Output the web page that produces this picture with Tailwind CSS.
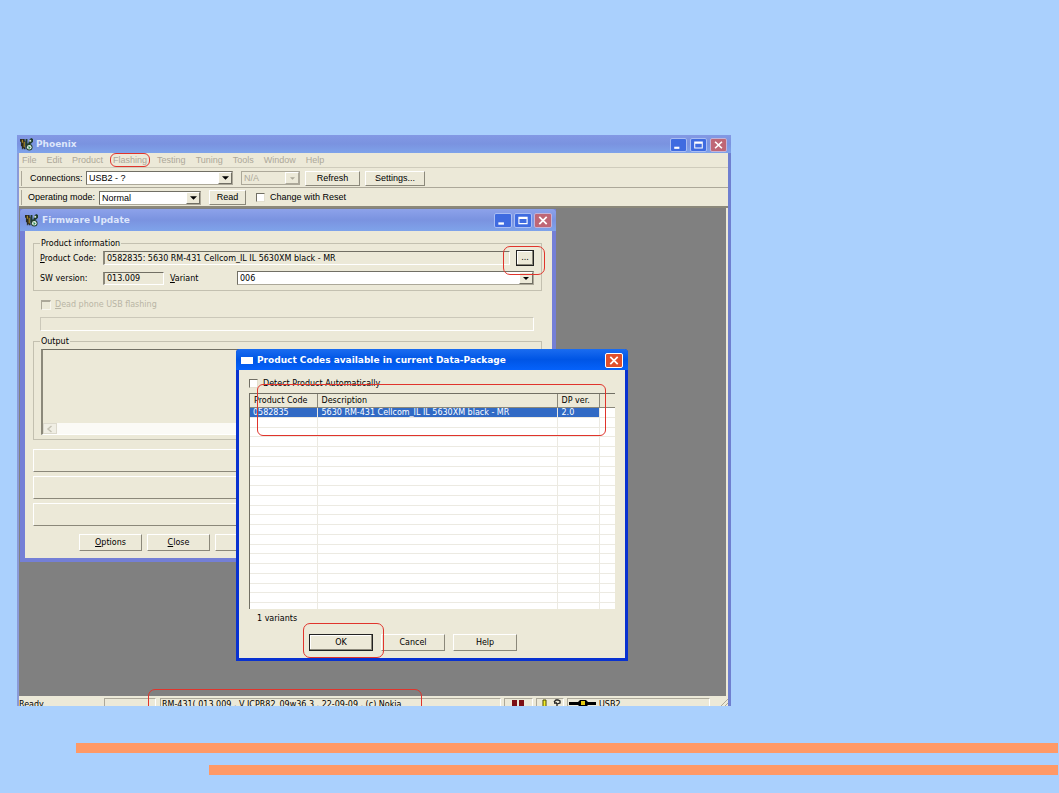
<!DOCTYPE html>
<html lang="en">
<head>
<meta charset="utf-8">
<title>Phoenix</title>
<script src="https://cdn.jsdelivr.net/npm/@tailwindcss/browser@4"></script>
</head>
<body class="min-h-screen bg-[#aad0fd] font-['Liberation_Sans',sans-serif] text-[9px] leading-[11px] text-black">
<svg class="hidden" aria-hidden="true">
  <symbol id="phoenix" viewBox="0 0 14 14">
    <path d="M0 1h5v2h1v9H4v-1H3v1H2V9H1V4H0z" fill="#2a2a22"/>
    <path d="M2 2h1v3H2zM4 4h1v6H4z" fill="#c9a227"/>
    <path d="M6 1h2v5h1l1-4 2-2 2 1v3l-2 2-2 1-2 4H7L6 8z" fill="#1f3b2c"/>
    <path d="M10 2h2v2h-2z" fill="#d8e8d0"/>
    <circle cx="10" cy="10" r="3.5" fill="#23402e"/>
    <circle cx="10" cy="10" r="2.5" fill="#dfeee4"/>
    <path d="M9 8.5l2.5 1.5L9.500 12z" fill="#2c8a58"/>
  </symbol>
  <symbol id="arrow" viewBox="0 0 8 4"><path d="M0 0h8L4 4z" fill="currentColor"/></symbol>
  <symbol id="min" viewBox="0 0 16 14"><path d="M3 9h6v2.500H3z" fill="#fff"/></symbol>
  <symbol id="max" viewBox="0 0 16 14"><path d="M3 3h10v8H3zM4.200 5.500v4.300h7.600V5.500z" fill="#fff" fill-rule="evenodd"/></symbol>
  <symbol id="close" viewBox="0 0 16 14"><path d="M4 3.200l8 7.600M12 3.200l-8 7.600" stroke="#fff" stroke-width="1.900" fill="none"/></symbol>
</svg>

<main class="flex min-h-screen flex-col pt-[135px]">
  <section class="relative ml-[17px] flex h-[571px] w-[714px] flex-col overflow-hidden bg-[#ece9d8]">
    <!-- Title bar -->
    <header class="flex h-[18px] shrink-0 items-center bg-linear-to-b from-[#8398e4] via-[#7a93e0] to-[#7fa3ea] pt-px pr-[4px] pl-[3px]">
      <svg class="size-[13px]"><use href="#phoenix"/></svg>
      <h1 class="ml-[3px] grow font-['DejaVu_Sans',sans-serif] text-[9px] font-bold text-[#dde6fb]">Phoenix</h1>
      <div class="flex gap-[3px]">
        <button aria-label="Minimize" class="h-[14px] w-[17px] rounded-[2px] border border-[#a9bdf3] bg-[#3f6be0]"><svg class="size-full"><use href="#min"/></svg></button>
        <button aria-label="Maximize" class="h-[14px] w-[17px] rounded-[2px] border border-[#a9bdf3] bg-[#3f6be0]"><svg class="size-full"><use href="#max"/></svg></button>
        <button aria-label="Close" class="h-[14px] w-[17px] rounded-[2px] border border-[#c3b3d8] bg-[#bf6675]"><svg class="size-full"><use href="#close"/></svg></button>
      </div>
    </header>

    <div class="flex min-h-0 grow flex-col border-r-[3px] border-l-2 border-r-[#6f7fd0] border-l-[#8a9ad8]">
      <nav class="flex h-[15px] shrink-0 items-center gap-[10px] border-b border-[#cfccbc] pl-[3px] text-[#aca899]">
        <button>File</button><button>Edit</button><button>Product</button><button>Flashing</button><button>Testing</button><button>Tuning</button><button>Tools</button><button>Window</button><button>Help</button>
      </nav>
      <div class="flex h-[20px] shrink-0 items-center border-b border-[#aca899] pt-px pl-[2px]">
        <span class="h-[15px] w-px bg-[#aca899]"></span>
        <label for="conn" class="w-[57px] pl-[8px]">Connections:</label>
        <div class="relative ml-[7px] h-[14px] w-[147px] border border-t-[#716f64] border-r-[#aca899] border-b-[#aca899] border-l-[#716f64] bg-white">
          <select id="conn" class="h-[12px] w-full appearance-none pl-[2px] leading-[12px]"><option>USB2 - ?</option></select>
          <span class="pointer-events-none absolute inset-y-0 right-0 flex w-[14px] items-center justify-center border border-white border-r-[#716f64] border-b-[#716f64] bg-[#ece9d8]"><svg class="h-[4px] w-[7px]"><use href="#arrow"/></svg></span>
        </div>
        <div class="relative ml-[8px] h-[14px] w-[59px] border border-[#aca899] text-[#aca899]">
          <select aria-label="Secondary connection" disabled class="h-[12px] w-full appearance-none pl-[2px] leading-[12px]"><option>N/A</option></select>
          <span class="pointer-events-none absolute inset-y-0 right-0 flex w-[14px] items-center justify-center border border-white border-r-[#aca899] border-b-[#aca899] bg-[#ece9d8]"><svg class="h-[3px] w-[5px]"><use href="#arrow"/></svg></span>
        </div>
        <button class="ml-[5px] h-[15px] w-[55px] border border-white border-r-[#8b887a] border-b-[#8b887a]">Refresh</button>
        <button class="ml-[5px] h-[15px] w-[60px] border border-white border-r-[#8b887a] border-b-[#8b887a]">Settings...</button>
      </div>
      <div class="flex h-[20px] shrink-0 items-center border-b-2 border-[#8b887a] pt-px pl-[2px]">
        <span class="h-[15px] w-px bg-[#aca899]"></span>
        <label for="mode" class="w-[70px] pl-[6px] whitespace-nowrap">Operating mode:</label>
        <div class="relative ml-[7px] h-[14px] w-[102px] border border-t-[#716f64] border-r-[#aca899] border-b-[#aca899] border-l-[#716f64] bg-white">
          <select id="mode" class="h-[12px] w-full appearance-none pl-[2px] leading-[12px]"><option>Normal</option></select>
          <span class="pointer-events-none absolute inset-y-0 right-0 flex w-[14px] items-center justify-center border border-white border-r-[#716f64] border-b-[#716f64] bg-[#ece9d8]"><svg class="h-[4px] w-[7px]"><use href="#arrow"/></svg></span>
        </div>
        <button class="ml-[8px] h-[15px] w-[37px] border border-white border-r-[#8b887a] border-b-[#8b887a]">Read</button>
        <input id="reset" type="checkbox" class="ml-[10px] size-[9px] appearance-none border border-[#716f64] border-r-[#e4e0d0] border-b-[#e4e0d0] bg-white">
        <label for="reset" class="ml-[5px]">Change with Reset</label>
      </div>

      <!-- Document area -->
      <div class="mr-[2px] grow bg-[#808080]"></div>

      <footer class="flex h-[10px] shrink-0 items-start overflow-hidden pt-[2px] font-['DejaVu_Sans',sans-serif] text-[8px] leading-[13px]">
        <span class="w-[85px]">Ready</span>
        <span class="h-[10px] w-[52px] border border-[#aca899] border-r-white"></span>
        <span class="ml-[4px] h-[20px] w-[341px] border border-[#aca899] border-r-white pl-[1px] leading-[11px]">RM-431( 013.009 , V ICPR82_09w36.3 , 22-09-09 , (c) Nokia</span>
        <span class="ml-[3px] h-[20px] w-[29px] border border-[#aca899] border-r-white"><svg class="mt-px ml-[7px] h-[8px] w-[12px]"><path d="M0 0h5v8H0zM7 0h5v8H7z" fill="#7c0f14"/></svg></span>
        <span class="ml-[3px] h-[20px] w-[28px] border border-[#aca899] border-r-white"><svg class="ml-[5px] h-[8px] w-[20px]"><path d="M1 8V1h3v7" fill="#f4ee2a" stroke="#4d4a00"/><path d="M12 3l2-2h2l2 1v2l-3 1v2M12 4h3" fill="none" stroke="#222" stroke-width="1.300"/></svg></span>
        <span class="ml-[3px] flex h-[20px] w-[143px] border border-[#aca899] border-r-white pl-[1px] leading-[11px]"><svg class="mr-[3px] h-[8px] w-[27px]"><path d="M0 3h9l2-2h6l2 2h8v3h-8l-2 2h-6L9 6H0z" fill="#000"/><path d="M12 2h4v4h-4z" fill="#e2c911"/></svg>USB2</span>
        <svg class="ml-auto h-[9px] w-[8px]"><path d="M0 9l8-8M4 9l4-4" stroke="#aca899"/></svg>
      </footer>
    </div>

    <!-- Firmware Update window -->
    <section class="absolute top-[74px] left-[3px] flex h-[353px] w-[536px] flex-col border-r-4 border-b-4 border-l-[5px] border-[#747fd6] bg-[#ece9d8] font-['DejaVu_Sans',sans-serif] text-[8px] leading-[11px]">
      <header class="-mr-1 -ml-[5px] flex h-[22px] shrink-0 items-center rounded-t bg-linear-to-b from-[#8da2ea] via-[#7a93e0] to-[#7fa3ea] pt-px pr-[4px] pl-[5px]">
        <svg class="size-[13px]"><use href="#phoenix"/></svg>
        <h2 class="ml-[4px] grow text-[9px] font-bold text-[#dde6fb]">Firmware Update</h2>
        <div class="flex gap-[2px]">
          <button aria-label="Minimize" class="h-[15px] w-[18px] rounded-[2px] border border-[#a9bdf3] bg-[#3f6be0]"><svg class="size-full"><use href="#min"/></svg></button>
          <button aria-label="Maximize" class="h-[15px] w-[18px] rounded-[2px] border border-[#a9bdf3] bg-[#3f6be0]"><svg class="size-full"><use href="#max"/></svg></button>
          <button aria-label="Close" class="h-[15px] w-[18px] rounded-[2px] border border-[#c3b3d8] bg-[#bf6675]"><svg class="size-full"><use href="#close"/></svg></button>
        </div>
      </header>
      <div class="flex grow flex-col pt-[7px] pr-[10px] pl-[8px]">
        <fieldset class="h-[53px] border border-[#c3c0b0] pr-[7px] pl-[6px]">
          <legend class="px-px">Product information</legend>
          <div class="mt-px flex h-[16px] items-center">
            <label for="code" class="w-[63px]"><u>P</u>roduct Code:</label>
            <input id="code" readonly value="0582835: 5630 RM-431 Cellcom_IL IL 5630XM black - MR" class="h-[14px] min-w-0 grow border-t border-r border-b border-l-2 border-t-[#716f64] border-r-white border-b-white border-l-[#8b887a] pl-[2px]">
            <button class="ml-[6px] h-[16px] w-[18px] border border-[#222] pb-px leading-none shadow-[inset_-1px_-1px_0_#8b887a,inset_1px_1px_0_#fff]">...</button>
          </div>
          <div class="mt-[5px] flex h-[14px] items-center">
            <label for="sw" class="w-[63px]">SW version:</label>
            <input id="sw" readonly value="013.009" class="h-[13px] w-[61px] border-t border-r border-b border-l-2 border-t-[#716f64] border-r-white border-b-white border-l-[#8b887a] pl-[2px]">
            <label for="variant" class="ml-[6px] w-[67px]"><u>V</u>ariant</label>
            <div class="relative h-[14px] grow border border-t-[#716f64] border-r-[#aca899] border-b-[#aca899] border-l-[#716f64] bg-white">
              <select id="variant" class="h-[12px] w-full appearance-none pt-px pl-[2px] leading-[11px]"><option>006</option></select>
              <span class="pointer-events-none absolute inset-y-0 right-0 flex w-[14px] items-center justify-center border border-white border-r-[#716f64] border-b-[#716f64] bg-[#ece9d8]"><svg class="h-[3px] w-[6px]"><use href="#arrow"/></svg></span>
            </div>
          </div>
        </fieldset>
        <div class="mt-[8px] flex h-[11px] items-center pl-[8px] text-[#b9b5a5]">
          <input id="dead" type="checkbox" disabled class="size-[10px] appearance-none border border-t-2 border-[#aca899] border-r-[#f8f6ee] border-b-[#f8f6ee]">
          <label for="dead" class="ml-[4px]"><u>D</u>ead phone USB flashing</label>
        </div>
        <div role="progressbar" aria-label="Progress" class="mt-[7px] mr-[8px] ml-[7px] h-[14px] shrink-0 border border-[#cbc8b9] border-r-white border-b-white"></div>
        <fieldset class="mt-[5px] h-[104px] border border-[#c3c0b0] pr-[7px] pl-[6px]">
          <legend class="px-px">Output</legend>
          <div class="mt-[2px] ml-px flex h-[86px] flex-col border border-l-2 border-t-[#716f64] border-r-white border-b-white border-l-[#8b887a]">
            <textarea aria-label="Output" readonly class="min-h-0 grow resize-none"></textarea>
            <div class="flex h-[11px] bg-[#fbfaf6]"><button aria-label="Scroll left" class="flex w-[14px] items-center justify-center border border-[#dcd9cc] bg-[#f0eee4]"><svg class="size-[8px]"><path d="M5.500 1L2 4l3.500 3" fill="none" stroke="#c5c2b4" stroke-width="1.500"/></svg></button></div>
          </div>
        </fieldset>
        <div class="mt-[9px] flex flex-col gap-[4px]">
          <button aria-label="Action 1" class="h-[23px] border border-white border-r-[#8b887a] border-b-[#8b887a]"></button>
          <button aria-label="Action 2" class="h-[23px] border border-white border-r-[#8b887a] border-b-[#8b887a]"></button>
          <button aria-label="Action 3" class="h-[23px] border border-white border-r-[#8b887a] border-b-[#8b887a]"></button>
        </div>
        <div class="mt-[8px] flex gap-[5px] pl-[46px]">
          <button class="h-[17px] w-[63px] border border-white border-r-[#8b887a] border-b-[#8b887a]"><u>O</u>ptions</button>
          <button class="h-[17px] w-[63px] border border-white border-r-[#8b887a] border-b-[#8b887a]"><u>C</u>lose</button>
          <button aria-label="Help" class="h-[17px] w-[63px] border border-white border-r-[#8b887a] border-b-[#8b887a]"></button>
        </div>
      </div>
    </section>

    <!-- Product codes dialog -->
    <section role="dialog" aria-labelledby="dlg" class="absolute top-[214px] left-[219px] flex h-[312px] w-[392px] flex-col rounded-t border-x-[3px] border-b-[3px] border-[#0831d0] bg-[#ece9d8] font-['DejaVu_Sans',sans-serif] text-[8px] leading-[11px]">
      <header class="-mx-[3px] flex h-[21px] shrink-0 items-center rounded-t bg-linear-to-b from-[#1a6cf0] via-[#0055e5] to-[#0562fb] pt-[2px] pr-[5px] pl-[5px]">
        <svg class="h-[7px] w-[12px]"><path d="M0 0h12v7H0z" fill="#fff"/></svg>
        <h2 id="dlg" class="ml-[4px] grow text-[9px] font-bold text-white">Product Codes available in current Data-Package</h2>
        <button aria-label="Close" class="h-[15px] w-[18px] rounded-[2px] border border-white bg-[#e0502c]"><svg class="size-full"><use href="#close"/></svg></button>
      </header>
      <div class="flex grow flex-col pr-[10px] pl-[10px]">
        <div class="mt-[7px] flex h-[12px] items-center">
          <input id="detect" type="checkbox" class="size-[9px] appearance-none border border-[#716f64] border-r-[#e4e0d0] border-b-[#e4e0d0] bg-white">
          <label for="detect" class="ml-[5px]">Detect Product Automatically</label>
        </div>
        <div class="mt-[4px] h-[216px] overflow-hidden border-t border-l border-[#716f64] bg-white">
          <table class="w-full table-fixed border-collapse text-left">
            <colgroup><col class="w-[67px]"><col><col class="w-[42px]"><col class="w-[16px]"></colgroup>
            <thead><tr class="h-[13px] bg-[#ece9d8]">
              <th class="border-r border-b border-[#8b887a] pl-[4px] font-normal whitespace-nowrap">Product Code</th>
              <th class="border-r border-b border-[#8b887a] pl-[4px] font-normal">Description</th>
              <th class="border-r border-b border-[#8b887a] pl-[4px] font-normal whitespace-nowrap">DP ver.</th>
              <th class="border-b border-[#8b887a]"></th></tr></thead>
            <tbody id="rows">
              <tr class="h-[10px] leading-[9px] text-white">
                <td class="border-r border-[#eceae2] bg-[#316ac5] pl-[3px]">0582835</td>
                <td class="border-r border-[#eceae2] bg-[#316ac5] pl-[4px]">5630 RM-431 Cellcom_IL IL 5630XM black - MR</td>
                <td class="border-r border-[#eceae2] bg-[#316ac5] pl-[4px]">2.0</td><td></td></tr>
            </tbody>
          </table>
        </div>
        <p class="mt-[4px] pl-[8px]">1 variants</p>
        <div class="mt-[10px] flex gap-[8px] pl-[60px]">
          <button class="h-[17px] w-[64px] border border-[#222] shadow-[inset_-1px_-1px_0_#8b887a,inset_1px_1px_0_#fff]">OK</button>
          <button class="h-[17px] w-[64px] border border-white border-r-[#8b887a] border-b-[#8b887a]">Cancel</button>
          <button class="h-[17px] w-[64px] border border-white border-r-[#8b887a] border-b-[#8b887a]">Help</button>
        </div>
      </div>
    </section>

    <!-- Red callouts over the controls to use -->
    <div class="pointer-events-none absolute top-[18px] left-[93px] h-[14px] w-[40px] rounded-[6px] border border-[#e0342c]"></div>
    <div class="pointer-events-none absolute top-[111px] left-[486px] h-[29px] w-[42px] rounded-[7px] border border-[#e0342c]"></div>
    <div class="pointer-events-none absolute top-[249px] left-[240px] h-[52px] w-[349px] rounded-[6px] border border-[#e0342c]"></div>
    <div class="pointer-events-none absolute top-[488px] left-[286px] h-[35px] w-[81px] rounded-[7px] border border-[#e0342c]"></div>
    <div class="pointer-events-none absolute top-[554px] left-[131px] h-[30px] w-[274px] rounded-[7px] border border-[#e0342c]"></div>
  </section>

  <div class="mt-[37px] mr-px ml-[76px] h-[10px] bg-[#ff9966]"></div>
  <div class="mt-[12px] mr-px ml-[209px] h-[10px] bg-[#ff9966]"></div>
</main>
<script>
  const rows = document.getElementById('rows');
  for (let i = 0; i < 20; i++) {
    const tr = document.createElement('tr');
    tr.className = i % 4 === 1 ? 'h-[9px]' : 'h-[10px]';
    tr.innerHTML = '<td class="border-t border-r border-[#eceae2]"></td>'.repeat(3) + '<td class="border-t border-[#eceae2]"></td>';
    rows.append(tr);
  }
</script>
</body>
</html>
